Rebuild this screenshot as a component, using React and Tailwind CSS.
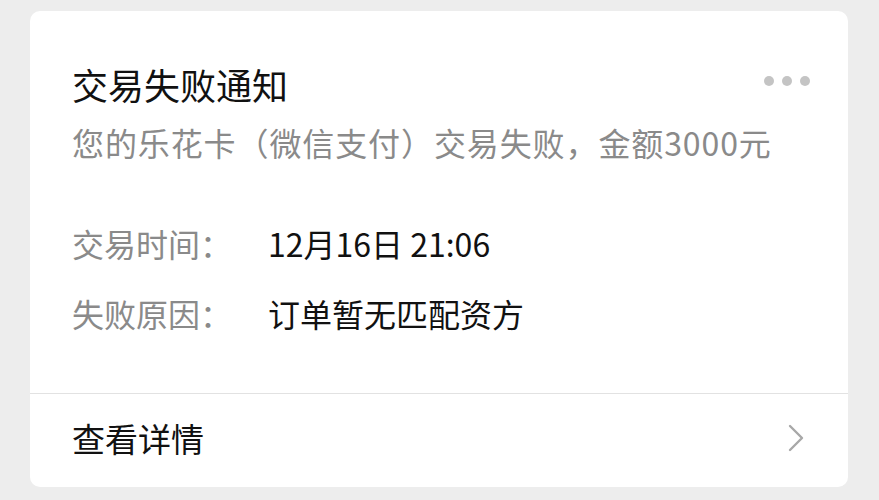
const font = { fontFamily: '"Noto Sans CJK SC", "Noto Sans", sans-serif' }

function InfoRow({ label, value }) {
  return (
    <div className="flex items-center h-[44px] leading-[44px] text-[32px]">
      <span className="w-[196px] shrink-0 text-[#8a8a8a]">{label}</span>
      <span className="text-[#111]">{value}</span>
    </div>
  )
}

export default function App() {
  return (
    <div className="min-h-[500px] bg-[#ededed] px-[30px] pt-[11px] pb-[13px]" style={font}>
      <div className="bg-white rounded-[10px] w-[818px] h-[476px] flex flex-col overflow-hidden">
        {/* header */}
        <div className="relative pl-[42px] pr-[36px] pt-[51px] pb-[58px]">
          <div className="text-[36px] leading-[44px] text-[#111]">交易失败通知</div>
          <div className="absolute right-[38px] top-[65px] flex gap-[8px]">
            <span className="w-[10px] h-[10px] rounded-full bg-[#c4c4c4]" />
            <span className="w-[10px] h-[10px] rounded-full bg-[#c4c4c4]" />
            <span className="w-[10px] h-[10px] rounded-full bg-[#c4c4c4]" />
          </div>
          <div className="mt-[14px] text-[32px] tracking-[0.9px] leading-[44px] text-[#8a8a8a] whitespace-nowrap">
            您的乐花卡（微信支付）交易失败，金额3000元
          </div>

          <div className="mt-[57px] flex flex-col gap-[26px]">
            <InfoRow label="交易时间：" value="12月16日 21:06" />
            <InfoRow label="失败原因：" value="订单暂无匹配资方" />
          </div>
        </div>

        {/* footer link */}
        <div className="border-t border-[#e2e2e2] flex-1 flex items-center justify-between pl-[42px] pr-[44px] pb-[6px]">
          <span className="text-[33px] leading-[44px] text-[#111]">查看详情</span>
          <svg width="16" height="28" viewBox="0 0 16 28" fill="none">
            <path d="M2 2l12 12L2 26" stroke="#a8a8a8" strokeWidth="2.4" strokeLinecap="round" strokeLinejoin="round" />
          </svg>
        </div>
      </div>
    </div>
  )
}
